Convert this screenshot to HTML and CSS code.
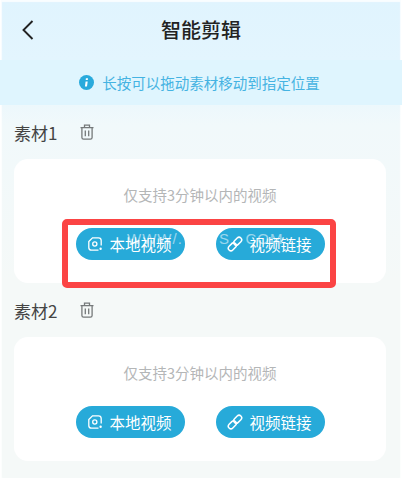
FILE: index.html
```html
<!DOCTYPE html>
<html lang="zh-CN">
<head>
    <meta charset="UTF-8">
    <meta name="viewport" content="width=device-width, initial-scale=1.0">
    <title>智能剪辑</title>
    <link rel="stylesheet" href="styles.css">
</head>
<body>

<div class="page">
    <div class="header">
        <svg class="back-icon" viewBox="0 0 14 22" width="14" height="22"><path d="M11.5 2 L2.5 11 L11.5 20" fill="none" stroke="#222" stroke-width="1.9"/></svg>
        <h1>智能剪辑</h1>
    </div>

    <div class="tip">
        <svg viewBox="0 0 15 15" width="15" height="15"><circle cx="7.5" cy="7.5" r="7.5" fill="#29aadc"/><path d="M6.6 6.4 H8.7 L8 11.4 H5.9 Z M6.9 3.2 H9 L8.8 5.1 H6.7 Z" fill="#fff"/></svg>
        <span>长按可以拖动素材移动到指定位置</span>
    </div>

    <div class="section">
        <div class="section-title">
            <span>素材1</span>
            <svg class="trash-icon" viewBox="0 0 14 16" width="14" height="16"><path d="M0.5 3.7 H13.5 M4.5 3.7 V1.2 H9.5 V3.7 M1.9 3.7 V13.5 Q1.9 15.2 3.6 15.2 H10.4 Q12.1 15.2 12.1 13.5 V3.7 M5.3 6.5 V12.2 M8.7 6.5 V12.2" fill="none" stroke="#75797a" stroke-width="1.3"/></svg>
        </div>
        <div class="card">
            <p class="hint">仅支持3分钟以内的视频</p>
            <div class="actions">
                <div class="btn">
                    <svg viewBox="0 0 16 16" width="16" height="16"><path d="M11.5 14.2 H4.5 Q1.8 14.2 1.8 11.5 V5.5 L5.5 1.8 H11.5 Q14.2 1.8 14.2 4.5 V9.5" fill="none" stroke="#fff" stroke-width="1.3"/><circle cx="7.8" cy="8" r="2.1" fill="none" stroke="#fff" stroke-width="1.3"/><circle cx="13.6" cy="12.8" r="1.2" fill="#fff"/></svg>
                    <span>本地视频</span>
                </div>
                <div class="btn">
                    <svg viewBox="0 0 16 16" width="16" height="16"><g fill="none" stroke="#fff" stroke-width="1.5"><rect x="6.2" y="2.6" width="9" height="5.2" rx="2.6" transform="rotate(-45 10.7 5.2)"/><rect x="0.8" y="8.2" width="9" height="5.2" rx="2.6" transform="rotate(-45 5.3 10.8)"/></g></svg>
                    <span>视频链接</span>
                </div>
            </div>
        </div>
    </div>

    <div class="section">
        <div class="section-title">
            <span>素材2</span>
            <svg class="trash-icon" viewBox="0 0 14 16" width="14" height="16"><path d="M0.5 3.7 H13.5 M4.5 3.7 V1.2 H9.5 V3.7 M1.9 3.7 V13.5 Q1.9 15.2 3.6 15.2 H10.4 Q12.1 15.2 12.1 13.5 V3.7 M5.3 6.5 V12.2 M8.7 6.5 V12.2" fill="none" stroke="#75797a" stroke-width="1.3"/></svg>
        </div>
        <div class="card">
            <p class="hint">仅支持3分钟以内的视频</p>
            <div class="actions">
                <div class="btn">
                    <svg viewBox="0 0 16 16" width="16" height="16"><path d="M11.5 14.2 H4.5 Q1.8 14.2 1.8 11.5 V5.5 L5.5 1.8 H11.5 Q14.2 1.8 14.2 4.5 V9.5" fill="none" stroke="#fff" stroke-width="1.3"/><circle cx="7.8" cy="8" r="2.1" fill="none" stroke="#fff" stroke-width="1.3"/><circle cx="13.6" cy="12.8" r="1.2" fill="#fff"/></svg>
                    <span>本地视频</span>
                </div>
                <div class="btn">
                    <svg viewBox="0 0 16 16" width="16" height="16"><g fill="none" stroke="#fff" stroke-width="1.5"><rect x="6.2" y="2.6" width="9" height="5.2" rx="2.6" transform="rotate(-45 10.7 5.2)"/><rect x="0.8" y="8.2" width="9" height="5.2" rx="2.6" transform="rotate(-45 5.3 10.8)"/></g></svg>
                    <span>视频链接</span>
                </div>
            </div>
        </div>
    </div>

    <div class="watermark">WWW/.       S.  COM</div>
    <div class="red-box"></div>
</div>

</body>
</html>
```

FILE: styles.css
```css
html, body {
    margin: 0;
    padding: 0;
    height: 480px;
    overflow: hidden;
    background-color: #fff;
    font-family: "Noto Sans CJK SC", "Noto Sans", sans-serif;
}

.page {
    position: relative;
    width: 402px;
    height: 480px;
    overflow: hidden;
    background: linear-gradient(to bottom, #e0f4fe 0, #e3f5fe 60px, #f1f9fb 125px, #f5f9f8 280px);
    box-shadow: inset 0 -1px 0 1px #fff, inset 0 0 1px 2px rgba(255, 255, 255, 0.8);
}

.header {
    height: 58px;
    padding-bottom: 2px;
    display: flex;
    align-items: center;
    justify-content: center;
    position: relative;
}

.header h1 {
    margin: 0;
    font-size: 20px;
    font-weight: 500;
    color: #222;
}

.back-icon {
    position: absolute;
    left: 21px;
    top: 19px;
}

.tip {
    height: 45px;
    box-sizing: border-box;
    padding-right: 3px;
    display: flex;
    align-items: center;
    justify-content: center;
    gap: 8px;
    background-color: #dff5fe;
    color: #45b3e2;
    font-size: 14.5px;
}

.section {
    padding: 0 16px 0 14px;
}

.section-title {
    height: 54px;
    display: flex;
    align-items: center;
    gap: 23px;
    font-size: 17px;
    color: #444;
}

.card {
    height: 124px;
    box-sizing: border-box;
    padding-top: 26px;
    background-color: #fff;
    border-radius: 14px;
}

.hint {
    margin: 0;
    height: 20px;
    line-height: 20px;
    text-align: center;
    font-size: 14.5px;
    color: #b4b6b7;
}

.actions {
    margin-top: 23px;
    display: flex;
    justify-content: center;
    gap: 31px;
}

.btn {
    width: 109px;
    height: 32px;
    box-sizing: border-box;
    padding-left: 11px;
    display: flex;
    align-items: center;
    gap: 7px;
    border-radius: 16px;
    background-color: #27aad9;
    color: #fff;
    font-size: 15.5px;
}

.watermark {
    position: absolute;
    left: 127px;
    top: 230px;
    font-family: "Liberation Sans", sans-serif;
    font-size: 15px;
    letter-spacing: 1px;
    white-space: pre;
    color: rgba(255, 255, 255, 0.55);
}

.red-box {
    position: absolute;
    left: 62px;
    top: 219px;
    width: 274px;
    height: 69px;
    box-sizing: border-box;
    border: 6px solid #fb4444;
    border-radius: 5px;
}
```
